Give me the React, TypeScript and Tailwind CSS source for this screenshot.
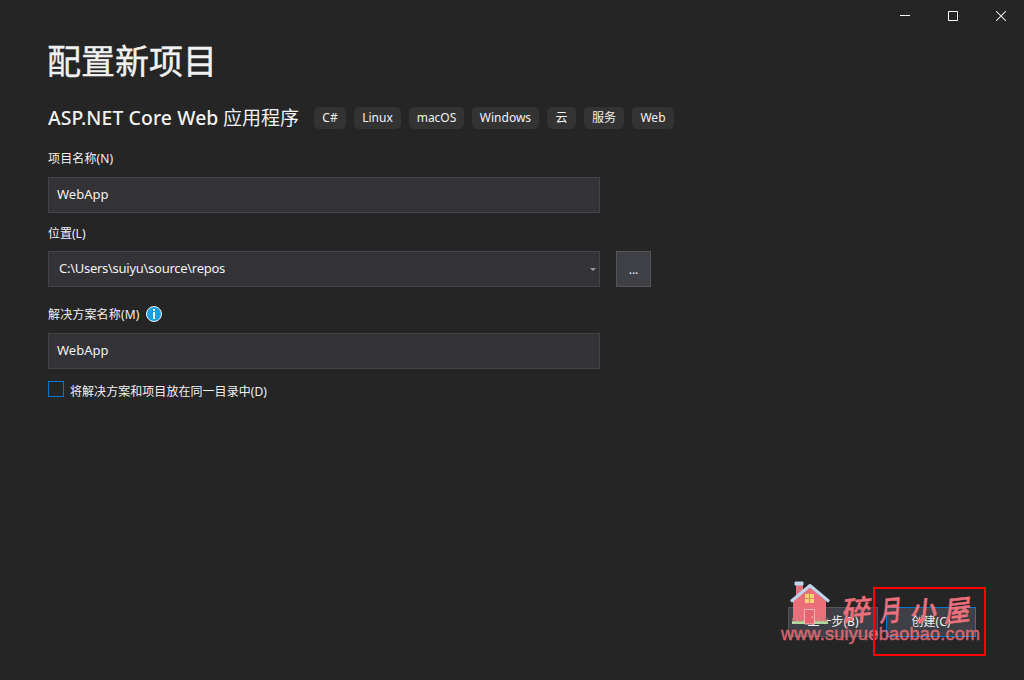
import type { ReactNode } from "react";

const tags = [
  { label: "C#", width: "w-8" },
  { label: "Linux", width: "w-[47px]" },
  { label: "macOS", width: "w-[55px]" },
  { label: "Windows", width: "w-[67px]" },
  { label: "云", width: "w-[29px]" },
  { label: "服务", width: "w-10" },
  { label: "Web", width: "w-[42px]" },
];

function WindowControls() {
  return (
    <div className="-mr-px flex h-8 justify-end">
      <button aria-label="最小化" className="flex w-12 items-center justify-center">
        <svg width="10" height="10" shapeRendering="crispEdges"><path d="M0 4h10v1H0z" fill="#fff" /></svg>
      </button>
      <button aria-label="最大化" className="flex w-12 items-center justify-center">
        <svg width="10" height="10"><path d="M.5.5h9v9h-9z" fill="none" stroke="#fff" /></svg>
      </button>
      <button aria-label="关闭" className="flex w-12 items-center justify-center">
        <svg width="10" height="10"><path d="M0 0l10 10M10 0L0 10" stroke="#e2e2e2" strokeWidth="1.1" /></svg>
      </button>
    </div>
  );
}

function Field({ children }: { children: ReactNode }) {
  return (
    <div className="flex h-9 w-[552px] items-center border border-[#434346] bg-[#333337] px-2 text-[13px]">
      {children}
    </div>
  );
}

function House() {
  return (
    <svg className="absolute left-[9px] top-0" width="43" height="47" viewBox="0 0 43 47">
      <path d="M7 4h7v13H7z" fill="#ee737d" />
      <path d="M6 2h8v3H6z" fill="#c7dcf4" stroke="#c7dcf4" strokeLinejoin="round" />
      <path d="M4 21L21 7l16 14v23H4z" fill="#f5737e" />
      <path d="M2 21.500L21 5.500l19 16" fill="none" stroke="#c7dff8" strokeWidth="3" strokeLinejoin="round" />
      <path d="M16 14h9v9h-9z" fill="#ffe078" />
      <path d="M20.500 14v9M16 18.500h9" stroke="#ee8571" />
      <path d="M15.500 29.500h10V44h-10z" fill="#ee6672" stroke="#f6bbc0" />
      <circle cx="23" cy="37" r=".7" fill="#ffe4a0" />
      <path d="M3 41h12v3H3zM26 41h13v3H26z" fill="#b9e0a4" />
      <path d="M5 42l-2-4M7 42l-2-5M10 42v-6M12 42l2-4M28 42l-1-4M32 42v-6M35 42l2-5M37 42l2-4" stroke="#b58c7a" />
    </svg>
  );
}

function Watermark() {
  return (
    <div className="pointer-events-none absolute left-[780px] top-[580px] h-[66px] w-[202px] text-[#f5737e] opacity-95">
      <House />
      <div className="absolute left-[63px] top-3 flex h-8 w-[130px] items-center justify-between font-['Noto_Sans_CJK_SC',sans-serif] text-[29px] leading-8 font-medium [-webkit-text-stroke:0.4px_#f5737e]">
        <span className="inline-block -skew-x-6 -skew-y-6">碎</span>
        <span className="inline-block -skew-x-6 -skew-y-3 scale-x-75">月</span>
        <span className="inline-block -skew-x-6 -skew-y-3 scale-90">小</span>
        <span className="inline-block -skew-x-6 -skew-y-6 scale-x-90">屋</span>
      </div>
      <div className="absolute left-[1px] top-[44px] font-['Liberation_Sans',sans-serif] text-[18px] leading-5 tracking-[0.26px] whitespace-nowrap opacity-85 [-webkit-text-stroke:0.5px_#f5737e]">
        www.suiyuebaobao.com
      </div>
    </div>
  );
}

export default function App() {
  return (
    <div className="relative flex h-[680px] w-[1024px] flex-col overflow-hidden bg-[#252526] font-['Noto_Sans','Noto_Sans_CJK_SC',sans-serif] text-xs text-[#f1f1f1]">
      <WindowControls />
      <main className="flex flex-1 flex-col pl-12">
        <h1 className="-ml-px flex h-[60px] items-center pb-0.5 text-[34px] leading-none [-webkit-text-stroke:0.4px_#f1f1f1]">配置新项目</h1>
        <div className="mt-[15px] flex h-[22px] items-center">
          <h2 className="flex w-[266px] items-center text-[19.4px] leading-none font-medium whitespace-nowrap">
            <span className="w-[175px] tracking-[0.1px]">ASP.NET Core Web</span>
            <span className="text-[19px] font-normal">应用程序</span>
          </h2>
          <div className="flex gap-2">
            {tags.map((tag) => (
              <span key={tag.label} className={`flex h-[22px] items-center justify-center rounded-[5px] bg-[#333334] ${tag.width}`}>
                {tag.label}
              </span>
            ))}
          </div>
        </div>
        <label className="mt-5 flex h-5 items-center tracking-[0.15px]">项目名称(N)</label>
        <div className="mt-2"><Field>WebApp</Field></div>
        <label className="mt-[11px] flex h-5 items-center">位置(L)</label>
        <div className="mt-[7px] flex gap-4">
          <Field>
            <span className="ml-0.5 flex-1 tracking-[-0.27px]">C:\Users\suiyu\source\repos</span>
            <svg className="-mr-[5px]" width="6" height="3"><path d="M0 0h6L3 3z" fill="#999" /></svg>
          </Field>
          <button className="flex h-9 w-[35px] items-center justify-center border border-[#555558] bg-[#3f3f46] pt-0.5">...</button>
        </div>
        <div className="mt-[17px] flex h-5 items-center">
          <label className="w-[98px] pt-0.5 tracking-[0.15px]">解决方案名称(M)</label>
          <svg width="16" height="16" viewBox="0 0 16 16">
            <circle cx="8" cy="8" r="7.5" fill="#1ba1e2" stroke="#f5f5f5" />
            <path d="M7 3h2v2H7zM7 6h2v7H7z" fill="#fff" />
          </svg>
        </div>
        <div className="mt-[9px]"><Field>WebApp</Field></div>
        <label className="mt-3 flex h-5 items-start">
          <span className="mr-1.5 size-4 border border-[#007acc]" />
          <span className="pt-px leading-5 tracking-[0.05px]">将解决方案和项目放在同一目录中(D)</span>
        </label>
        <footer className="mt-auto mr-12 mb-[43px] flex justify-end gap-2">
          <button className="h-[30px] w-[90px] border border-[#555558] bg-[#3f3f46]">上一步(B)</button>
          <button className="h-[30px] w-[90px] border border-[#007acc] bg-[#3f3f46]">创建(C)</button>
        </footer>
      </main>
      <Watermark />
      <div className="absolute left-[873px] top-[587px] h-[69px] w-[113px] border-2 border-[#f00]" />
    </div>
  );
}
